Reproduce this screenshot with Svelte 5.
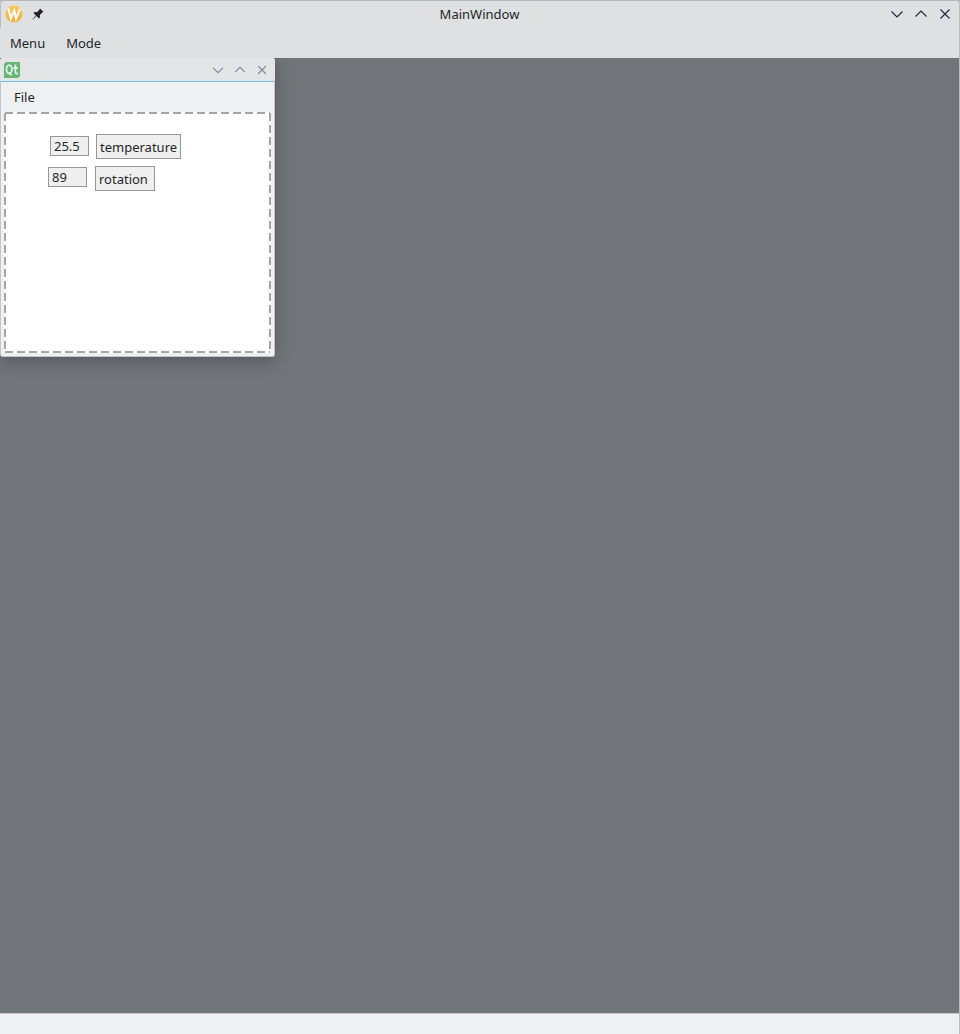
<script>
  const fields = [
    { kind: 'value', text: '25.5', x: 50, y: 136, w: 39, h: 20 },
    { kind: 'label', text: 'temperature', x: 96, y: 134, w: 85, h: 25 },
    { kind: 'value', text: '89', x: 48, y: 167, w: 39, h: 20 },
    { kind: 'label', text: 'rotation', x: 95, y: 166, w: 60, h: 25 }
  ];
  const canvasX = 4;
  const canvasY = 112;
</script>

{#snippet controls()}
  <svg width="18" height="18" viewBox="0 0 18 18"><path d="M3.5 6.5 9 12l5.5-5.5" /></svg>
  <svg width="18" height="18" viewBox="0 0 18 18"><path d="M3.5 11.5 9 6l5.5 5.5" /></svg>
  <svg width="18" height="18" viewBox="0 0 18 18"><path d="m4.5 4.5 9 9m0-9-9 9" /></svg>
{/snippet}

<div class="main">
  <header class="titlebar">
    <div class="left">
      <svg class="logo" width="18" height="18" viewBox="0 0 18 18">
        <defs>
          <linearGradient id="sun" x1="0" y1="0" x2="0" y2="1">
            <stop offset="0" stop-color="#fbc75c" />
            <stop offset="1" stop-color="#f4ad3c" />
          </linearGradient>
        </defs>
        <circle cx="9" cy="9" r="8.5" fill="url(#sun)" />
        <path d="M3.3 3.3 5.9 13.6 9.2 5.2 11 13.6 15 4" fill="none" stroke="#fff" stroke-width="2" />
      </svg>
      <svg class="pin" width="12" height="12" viewBox="0 0 12 12">
        <path d="M8 0.5 11.5 4 10.3 4.5 7.8 7 8 9.5 7 10.5 4.4 8 .8 11.5.4 11.2 3.9 7.5 1.5 5 2.5 4.1 5 4.2 7.4 1.8Z" fill="#1f2326" />
      </svg>
    </div>
    <div class="title">MainWindow</div>
    <div class="controls outer">{@render controls()}</div>
  </header>
  <nav class="menubar"><span>Menu</span><span>Mode</span></nav>

  <main class="workspace">
    <section class="subwindow">
      <div class="subtitle">
        <svg width="16" height="16" viewBox="0 0 16 16">
          <path d="M2 0H16V14L14 16H0V2Z" fill="#67b56f" />
          <g fill="none" stroke="#dff3f0" stroke-width="1.8">
            <ellipse cx="5.2" cy="7.3" rx="2.7" ry="4.2" />
            <path d="m5.6 11 2 2.4M11.4 2.6V10Q11.4 12 14 11.5M9.4 5.8H14" />
          </g>
        </svg>
        <div class="controls inner">{@render controls()}</div>
      </div>
      <div class="submenu">File</div>
      <div class="canvas">
        <svg class="dashes" width="267" height="241" viewBox="0 0 267 241">
          <path d="M1 1H266" />
          <path d="M1 240H266" />
          <path d="M1 1V240" />
          <path d="M266 1V240" />
        </svg>
        {#each fields as f}
          <div
            class="field {f.kind}"
            style="left:{f.x - canvasX}px;top:{f.y - canvasY}px;width:{f.w}px;height:{f.h}px"
          >{f.text}</div>
        {/each}
      </div>
    </section>
  </main>
  <footer></footer>
</div>

<style>
  :global(body) {
    margin: 0;
    background: #b5b6ba;
  }
  .main {
    box-sizing: border-box;
    width: 960px;
    height: 1034px;
    display: flex;
    flex-direction: column;
    border-top: 1px solid #b5b6ba;
    border-right: 1px solid #babbbd;
    border-radius: 4px 4px 0 0;
    background: #dee0e2;
    overflow: hidden;
    font: 13px/18px "Noto Sans", sans-serif;
    color: #232629;
  }
  .titlebar {
    box-sizing: border-box;
    height: 27px;
    flex: none;
    display: grid;
    grid-template-columns: 1fr auto 1fr;
    align-items: center;
    border-left: 1px solid #babbbd;
    border-radius: 4px 0 0 0;
    padding: 0 5px 1px 4px;
  }
  .left {
    display: flex;
    align-items: center;
    gap: 9px;
  }
  .controls {
    display: flex;
    justify-content: flex-end;
  }
  .controls svg {
    fill: none;
    stroke: #232629;
    stroke-width: 1.1;
  }
  .outer {
    gap: 6px;
  }
  .inner {
    gap: 6px;
    padding-right: 1px;
  }
  .controls.inner svg {
    width: 16px;
    height: 16px;
    stroke: #85888b;
    stroke-width: 1.2;
  }
  .menubar {
    height: 30px;
    flex: none;
    display: flex;
    align-items: center;
    gap: 21px;
    padding-left: 10px;
  }
  .workspace {
    position: relative;
    flex: 1;
    background: #717479;
    overflow: hidden;
  }
  .subwindow {
    position: absolute;
    left: 0;
    top: 0;
    box-sizing: border-box;
    width: 275px;
    height: 299px;
    display: flex;
    flex-direction: column;
    background: #eff0f1;
    border: solid #c2c4c7;
    border-width: 0 1px 1px;
    border-radius: 3px;
    box-shadow: 0 4px 16px rgba(0, 0, 0, 0.25);
  }
  .subtitle {
    box-sizing: border-box;
    height: 24px;
    flex: none;
    display: flex;
    align-items: center;
    justify-content: space-between;
    margin: 0 -1px;
    padding: 0 4px;
    background: #e3e5e6;
    border-bottom: 1px solid #7fbfe2;
    border-radius: 3px 3px 0 0;
  }
  .submenu {
    height: 30px;
    flex: none;
    line-height: 30px;
    padding-left: 13px;
  }
  .canvas {
    position: relative;
    width: 267px;
    height: 241px;
    margin-left: 3px;
    background: #fff;
  }
  .dashes {
    display: block;
    fill: none;
    stroke: #a6a6a8;
    stroke-width: 2;
    stroke-dasharray: 8 4;
  }
  .field {
    position: absolute;
    box-sizing: border-box;
    display: flex;
    align-items: center;
    padding-left: 3px;
    background: #efefef;
    border: 1px solid #97979a;
    white-space: nowrap;
  }
  footer {
    box-sizing: border-box;
    height: 21px;
    flex: none;
    background: #eff0f1;
    border-top: 1px solid #c3c5c7;
  }
</style>
